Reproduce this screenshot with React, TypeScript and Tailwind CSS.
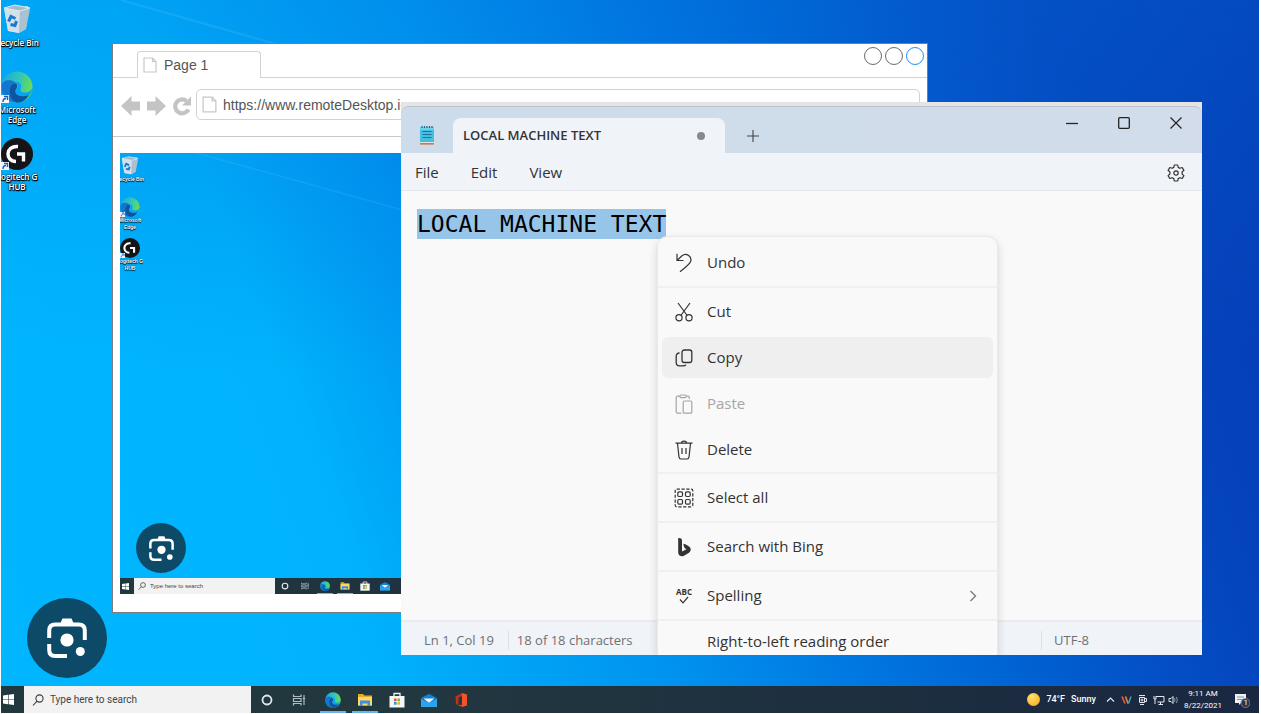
import React from "react";

type SizeProps = { small?: boolean };

function RecycleIcon({ small }: SizeProps) {
  return (
    <svg viewBox="0 0 32 32" className={small ? "size-5" : "size-8"} aria-hidden="true">
      <path d="M3 4 27 2 25 25 18 29 7 27Z" fill="#c3d9e6" />
      <path d="M3 4 19 6 18 29 7 27Z" fill="#d3e1ea" />
      <path d="M19 6 29 5 25 25 18 29Z" fill="#a9c1d0" />
      <path d="M3 4 14 1 29 4 19 7Z" fill="#a3bbc9" stroke="#dcebf3" strokeWidth="1" />
      <path d="M7.500 17.500 10 12.500 14.500 14.500M15.500 17 14 21.500 9.500 20.500" fill="none" stroke="#1a78d0" strokeWidth="3" />
    </svg>
  );
}

function EdgeLogo({ className, id }: { className: string; id: string }) {
  return (
    <svg viewBox="0 0 32 32" className={className} aria-hidden="true">
      <defs>
        <linearGradient id={id} x1="0" y1="0.300" x2="1" y2="0.500">
          <stop offset="0" stopColor="#1fa9dc" />
          <stop offset="0.500" stopColor="#2dc4c0" />
          <stop offset="1" stopColor="#6fdd4b" />
        </linearGradient>
      </defs>
      <circle cx="16" cy="16" r="15.500" fill={`url(#${id})`} />
      <path d="M.500 16C1 8 9 8.500 13 10.500 18 13 16 17 14.500 19 13 24 20 27 28 24 25 29 21 31.500 16 31.500 7 31.500.500 25 .500 16Z" fill="#1377cf" />
      <path d="M9 22C8 15 12 12 15 13 17 14 16 17 14.500 19 13 24 20 27 28.500 23 24 31 19 31.500 16 31.500 12 30.500 9.500 27 9 22Z" fill="#10549f" />
      <path d="M15 19C18 16 17 13 15 11.500 17 10 21 13 20 17 18.500 19.500 20 21.500 24 21.500 28 21.500 30 19.500 31.500 17 31 20 30 22 28.500 24 20 27 13.500 24 15 19Z" fill="#08a3f5" />
    </svg>
  );
}

function LogitechIcon({ small }: SizeProps) {
  return (
    <svg viewBox="0 0 32 32" className={small ? "size-5" : "size-8"} aria-hidden="true">
      <circle cx="16" cy="16" r="16" fill="#151518" />
      <path d="M17 8.500C4 7.500 4 23.500 15 23.500" fill="none" stroke="#fff" strokeWidth="3.400" />
      <path d="M16 16H22.500V23.500" fill="none" stroke="#fff" strokeWidth="3.400" />
    </svg>
  );
}

function ShortcutMark({ small }: SizeProps) {
  return (
    <svg
      viewBox="0 0 8 8"
      className={small ? "absolute bottom-0 left-0 size-[5px]" : "absolute bottom-0 left-0 size-2"}
      aria-hidden="true"
    >
      <rect width="8" height="8" fill="#f2f6fa" />
      <path d="M2 7C2 4 3.500 3.500 5 3.500M3 1.500H6.500V5" fill="none" stroke="#1b62b5" strokeWidth="1.400" />
    </svg>
  );
}

function DesktopIcons({ small }: SizeProps) {
  const item = small ? "flex h-[41px] w-5 flex-col items-center" : "flex h-[67px] w-8 flex-col items-center";
  const label = small
    ? "text-center text-[5px] leading-[7px] font-semibold whitespace-nowrap text-white [text-shadow:0_1px_1px_#000,0_0_1px_#000]"
    : "mt-0.5 text-center text-[8px] leading-[10px] font-semibold whitespace-nowrap text-white [text-shadow:0_1px_1px_#000,1px_1px_1px_#000,0_0_2px_#000]";
  return (
    <ul className={small ? "pt-[3px]" : "pt-1"}>
      <li className={item}>
        <RecycleIcon small={small} />
        <span className={label}>Recycle Bin</span>
      </li>
      <li className={item}>
        <span className="relative flex">
          <EdgeLogo className={small ? "size-5" : "size-8"} id={small ? "edge-icon-s" : "edge-icon-l"} />
          <ShortcutMark small={small} />
        </span>
        <span className={label}>
          Microsoft
          <br />
          Edge
        </span>
      </li>
      <li className={item}>
        <span className="relative flex">
          <LogitechIcon small={small} />
          <ShortcutMark small={small} />
        </span>
        <span className={label}>
          Logitech G
          <br />
          HUB
        </span>
      </li>
    </ul>
  );
}

function LensButton({ small }: SizeProps) {
  return (
    <button
      type="button"
      aria-label="Search with Lens"
      className={
        small
          ? "mb-[5px] ml-4 flex size-[50px] shrink-0 items-center justify-center rounded-full bg-[#0d4a68]"
          : "mb-2 ml-[26px] flex size-20 shrink-0 items-center justify-center rounded-full bg-[#0d4a68]"
      }
    >
      <svg viewBox="0 0 40 40" className={small ? "size-[25px]" : "size-10"} aria-hidden="true">
        <path d="M2.200 20V12.500Q2.200 6.500 8.200 6.500H31.800Q37.800 6.500 37.800 12.500V22M2.200 26V32Q2.200 38 8.200 38H20" fill="none" stroke="#fff" strokeWidth="4" />
        <path d="M13.500 5 15.500 .500H24.500L26.500 5Z" fill="#fff" />
        <circle cx="20" cy="22" r="6.600" fill="#fff" />
        <circle cx="33.300" cy="33.500" r="4.500" fill="#fff" />
      </svg>
    </button>
  );
}

function TaskIcons({ small }: SizeProps) {
  const cell = small ? "flex h-4 w-5 items-center justify-center" : "flex h-[27px] w-8 items-center justify-center";
  const active = small
    ? "flex h-4 w-5 items-center justify-center bg-[linear-gradient(#6cb4f0,#6cb4f0)] bg-[length:16px_1px] bg-bottom bg-no-repeat"
    : "flex h-[27px] w-8 items-center justify-center bg-[linear-gradient(#6cb4f0,#6cb4f0)] bg-[length:26px_2px] bg-bottom bg-no-repeat";
  const icon = small ? "size-[10px]" : "size-4";
  return (
    <div className={small ? "flex" : "flex gap-0.5"}>
      <div className="flex">
        <button type="button" aria-label="Cortana" className={cell}>
          <svg viewBox="0 0 16 16" className={icon}>
            <circle cx="8" cy="8" r="4.500" fill="none" stroke="#e4eaec" strokeWidth="1.800" />
          </svg>
        </button>
        <button type="button" aria-label="Task view" className={cell}>
          <svg viewBox="0 0 16 16" className={icon} fill="none" stroke="#b3bdc1" strokeWidth="1.200">
            <path d="M2.500 2.500V4.500H10V2.500M2.500 13.500V11.500H10V13.500M2.500 6.500H10V9.500H2.500ZM13 3V13M11.800 6.500H14.200" />
          </svg>
        </button>
      </div>
      <div className="flex">
        <button type="button" aria-label="Microsoft Edge" className={active}>
          <EdgeLogo className={icon} id={small ? "edge-task-s" : "edge-task-l"} />
        </button>
        <button type="button" aria-label="File Explorer" className={active}>
          <svg viewBox="0 0 16 16" className={icon}>
            <path d="M1 2H6L7.500 3.500H15V13.500H1Z" fill="#e9a920" />
            <path d="M1 5H15V13.500H1Z" fill="#fdd768" />
            <path d="M3 8.500H13V14H10.500V11.500H5.500V14H3Z" fill="#3f8fdc" />
          </svg>
        </button>
        <button type="button" aria-label="Microsoft Store" className={cell}>
          <svg viewBox="0 0 16 16" className={icon}>
            <path d="M5 5V1.500H11V5" fill="none" stroke="#eef2f4" strokeWidth="1.300" />
            <path d="M.500 4H15.500V15.500H.500Z" fill="#f4f6f7" />
            <path d="M5 6.500H7.600V9.200H5Z" fill="#e8512f" />
            <path d="M8.400 6.500H11V9.200H8.400Z" fill="#7db82c" />
            <path d="M5 10H7.600V12.700H5Z" fill="#1f9fe0" />
            <path d="M8.400 10H11V12.700H8.400Z" fill="#f4b51c" />
          </svg>
        </button>
        <button type="button" aria-label="Mail" className={cell}>
          <svg viewBox="0 0 16 16" className={icon}>
            <path d="M0 6 8 1.500 16 6V15H0Z" fill="#0f63b5" />
            <path d="M1 5.500 8 2.500 15 5.500 8 10.500Z" fill="#1581d3" />
            <path d="M2.500 6.500H13.500L8 11Z" fill="#e9f4fb" />
            <path d="M0 6.500 8 11 16 6.500V15H0Z" fill="#2ba4ea" />
          </svg>
        </button>
        <button type="button" aria-label="Office" className={cell}>
          <svg viewBox="0 0 16 16" className={icon}>
            <path d="M9 1 14 2.500V13.500L9 15Z" fill="#f0552a" />
            <path d="M9 1V4L5.500 5.500V11.500L3 12.500 2.500 4.500Z" fill="#c4301c" />
            <path d="M3 12.500 9 13V15Z" fill="#d83b1e" />
          </svg>
        </button>
      </div>
    </div>
  );
}

function Tray() {
  return (
    <div className="ml-auto flex items-center text-[9px] text-white">
      <span className="size-[13px] rounded-full bg-[radial-gradient(circle_at_35%_30%,#ffe36b,#f9a11b)]" />
      <span className="ml-1.5 flex gap-1.5 font-medium">
        <span>74°F</span>
        <span>Sunny</span>
      </span>
      <svg viewBox="0 0 72 12" className="ml-2.5 h-3 w-18" fill="none" stroke="#e4e8ee" strokeWidth="1" aria-hidden="true">
        <path d="M1 7.500 4.500 4 8 7.500" strokeWidth="1.200" />
        <path d="M16 2.500 19 9.500" stroke="#e0593b" strokeWidth="1.800" />
        <path d="M19.500 2.500 22 9.500" stroke="#d98a4a" strokeWidth="1.600" />
        <path d="M22.500 9.500 25 2.500" stroke="#3da8b8" strokeWidth="1.400" />
        <path d="M33 1.500H39M34 10.500H38M33.500 3.500H38.500V8.500H33.500ZM39 4.500H40.500V7.500H39" />
        <circle cx="36" cy="6" r="1" />
        <path d="M50 2.500H58V8H51.500M54.500 8V10.500M52.500 10.500H57M48 2V5H50V2M49 5V10" />
        <path d="M63 4.500H65L67 2.500V9.500L65 7.500H63Z" />
        <path d="M68.500 4Q69.500 6 68.500 8M70.500 3Q72 6 70.500 9" stroke="#8a95a8" />
      </svg>
      <time className="ml-1.5 text-center text-[8px] leading-3">
        9:11 AM
        <br />
        8/22/2021
      </time>
      <span className="relative mr-[9px] ml-3 flex size-4">
        <svg viewBox="0 0 16 16" className="size-4" aria-hidden="true">
          <path d="M1 2H12V11H7L5 13V11H1Z" fill="#eef0f4" />
          <path d="M3 5H10M3 7.500H10" stroke="#8b93a3" strokeWidth="1" />
          <circle cx="11.500" cy="11" r="4.500" fill="#2a3548" stroke="#8b93a3" strokeWidth=".800" />
        </svg>
        <span className="absolute right-0.5 bottom-0 text-[8px] leading-[10px]">1</span>
      </span>
    </div>
  );
}

function Taskbar({ small }: SizeProps) {
  return (
    <footer
      className={
        small
          ? "flex h-4 shrink-0 items-center bg-linear-to-r from-[#22383f] to-[#1a2740]"
          : "flex h-[27px] shrink-0 items-center bg-linear-to-r from-[#22383f] from-30% to-[#1a2740] font-[Roboto,'Open_Sans',sans-serif]"
      }
    >
      <button
        type="button"
        aria-label="Start"
        className={small ? "flex w-3.5 justify-center pr-1" : "flex w-[23px] shrink-0 justify-center pr-2"}
      >
        <svg viewBox="0 0 11 11" className={small ? "size-[7px]" : "size-[11px]"} fill="#fff">
          <path d="M0 1.500 5 .800V5.200H0ZM5.600.700 11 0V5.200H5.600ZM0 5.800H5V10.200L0 9.500ZM5.600 5.800H11V11L5.600 10.300Z" />
        </svg>
      </button>
      <label
        className={
          small
            ? "flex h-4 w-[141px] items-center gap-1 bg-[#f2f2f2] px-1"
            : "flex h-[27px] w-[227px] items-center gap-1.5 bg-[#f2f2f2] px-2"
        }
      >
        <svg
          viewBox="0 0 12 12"
          className={small ? "size-2 shrink-0" : "size-3 shrink-0"}
          fill="none"
          stroke="#3a3a3a"
          strokeWidth="1.100"
          aria-hidden="true"
        >
          <circle cx="7.500" cy="4.500" r="3.600" />
          <path d="M5 7.200 1 11.500" />
        </svg>
        <input
          type="text"
          aria-label="Search"
          placeholder="Type here to search"
          className={
            small
              ? "w-full min-w-0 bg-transparent text-[6px] leading-2 outline-none placeholder:text-[#444]"
              : "w-full min-w-0 bg-transparent text-[10px] leading-4 outline-none placeholder:text-[#444]"
          }
        />
      </label>
      <TaskIcons small={small} />
      {!small && <Tray />}
    </footer>
  );
}

function Desktop({ small, children }: { small?: boolean; children?: React.ReactNode }) {
  return (
    <div className="relative flex flex-1 flex-col overflow-hidden bg-[linear-gradient(to_bottom,#0078e040,transparent_50%),linear-gradient(70deg,#00b6ff_0%,#00b3fc_25%,#0095f0_44%,#0072de_60%,#005fd0_70%,#0450c6_77%,#0444bd_85%,#053ab4_100%)]">
      <svg
        viewBox="0 0 1258 713"
        preserveAspectRatio="none"
        className="pointer-events-none absolute inset-0 size-full"
        aria-hidden="true"
      >
        <path d="M120 0 560 125" stroke="#5cc4ff" strokeOpacity=".220" strokeWidth="2" />
      </svg>
      <div className="flex-1">
        <DesktopIcons small={small} />
      </div>
      <LensButton small={small} />
      <Taskbar small={small} />
      {children}
    </div>
  );
}

function PageIcon({ className }: { className: string }) {
  return (
    <svg viewBox="0 0 14 16" className={className} fill="#fff" stroke="#c8c8c8" strokeWidth="1.200" aria-hidden="true">
      <path d="M1 1H9.500L13 4.500V15H1ZM9.500 1V4.500H13" />
    </svg>
  );
}

function BrowserWindow() {
  return (
    <section
      aria-label="Browser"
      className="absolute top-[43px] left-[111px] flex h-[570px] w-[816px] flex-col border border-[#7c7c7c] bg-white font-['Liberation_Sans',Arial,sans-serif] text-[#555]"
    >
      <div className="flex h-[34px] shrink-0 border-b border-[#d2d2d2] pt-[7px] pr-[3px] pl-6">
        <div className="flex h-[27px] w-[124px] items-center gap-[7px] rounded-t border border-b-0 border-[#d2d2d2] bg-white pl-[5px] text-[14px]">
          <PageIcon className="h-4 w-3.5" />
          Page 1
        </div>
        <div className="-mt-1 ml-auto flex gap-[3px]">
          <button type="button" aria-label="Minimize" className="size-[18px] rounded-full border border-[#6b6b6b]" />
          <button type="button" aria-label="Maximize" className="size-[18px] rounded-full border border-[#6b6b6b]" />
          <button type="button" aria-label="Close" className="size-[18px] rounded-full border border-[#1e90ff]" />
        </div>
      </div>
      <div className="flex h-[59px] shrink-0 items-start border-b border-[#c8c8c8] pt-[11px] pr-[7px] pl-2">
        <div className="flex h-[31px] items-center gap-[7px] pt-0.5 text-[#c4c4c4]">
          <button type="button" aria-label="Back">
            <svg viewBox="0 0 19 20" className="h-5 w-[19px]" fill="currentColor">
              <path d="M0 10 10.500 0V5.500H19V14.500H10.500V20Z" />
            </svg>
          </button>
          <button type="button" aria-label="Forward">
            <svg viewBox="0 0 19 20" className="h-5 w-[19px]" fill="currentColor">
              <path d="M19 10 8.500 0V5.500H0V14.500H8.500V20Z" />
            </svg>
          </button>
          <button type="button" aria-label="Reload">
            <svg viewBox="0 0 19 20" className="h-5 w-[19px]" fill="none" stroke="currentColor" strokeWidth="4.200">
              <path d="M15.500 13.500A7 7 0 1 1 13.500 4.800" />
              <path d="M18 .500V9.500H9Z" fill="currentColor" stroke="none" />
            </svg>
          </button>
        </div>
        <label className="ml-1 flex h-[31px] flex-1 items-center gap-1.5 rounded-[5px] border border-[#d2d2d2] pl-[5px]">
          <PageIcon className="h-[17px] w-[15px] shrink-0" />
          <input
            type="text"
            aria-label="Address"
            defaultValue="https://www.remoteDesktop.io"
            className="w-full min-w-0 bg-transparent text-[14px] leading-5 outline-none"
          />
        </label>
      </div>
      <div className="flex flex-1 flex-col px-[7px] pt-4 pb-[18px]">
        <Desktop small />
      </div>
    </section>
  );
}

function NotepadIcon() {
  return (
    <svg viewBox="0 0 16 20" className="h-5 w-4" aria-hidden="true">
      <path d="M1 17H15V19.500H1Z" fill="#e8e2da" />
      <path d="M1 18.200H15V19.500H1Z" fill="#b5643a" />
      <path d="M1 2H15V17H1Z" fill="#43bfe0" />
      <path d="M1 2H15V5H1Z" fill="#6bd4ec" />
      <path d="M3 1V3M5.500 1V3M8 1V3M10.500 1V3M13 1V3" stroke="#1a6a8c" strokeWidth="1.200" />
      <path d="M3.500 6.500H12.500M3.500 9.500H12.500M3.500 12.500H12.500" stroke="#1f7396" strokeWidth="1.100" />
    </svg>
  );
}

const menuIcon = "size-5 shrink-0";

function UndoIcon() {
  return (
    <svg viewBox="0 0 20 20" className={menuIcon} fill="none" stroke="currentColor" strokeWidth="1.200">
      <path d="M3 .800V7.500H9.500M3 7.500 8 2.700C12.500-1 18.500 4 16.500 8.700 15.500 11.200 12 14 6 18.800" />
    </svg>
  );
}
function CutIcon() {
  return (
    <svg viewBox="0 0 20 20" className={menuIcon} fill="none" stroke="currentColor" strokeWidth="1.200">
      <path d="M4 1 12.800 13M16 1 7.200 13" />
      <circle cx="5" cy="15.800" r="3.100" />
      <circle cx="15" cy="15.800" r="3.100" />
    </svg>
  );
}
function CopyIcon() {
  return (
    <svg viewBox="0 0 20 20" className={menuIcon} fill="none" stroke="currentColor" strokeWidth="1.300">
      <rect x="8" y="2" width="9.800" height="12.500" rx="2.200" />
      <path d="M5.500 5Q2.200 5 2.200 8.500V14.500Q2.200 17.800 5.500 17.800H8.500Q11.300 17.800 12 16.800" />
    </svg>
  );
}
function PasteIcon() {
  return (
    <svg viewBox="0 0 20 20" className={menuIcon} fill="none" stroke="currentColor" strokeWidth="1.200">
      <path d="M5.500 2.200H3.500Q2.200 2.200 2.200 3.500V18Q2.200 19.200 3.500 19.200H7.500M12.500 2.200H14Q15.300 2.200 15.300 3.500V5" />
      <rect x="5.800" y="1" width="6.400" height="2.600" rx="1.300" />
      <rect x="9.200" y="7" width="8.600" height="12.200" rx="1.300" />
    </svg>
  );
}
function DeleteIcon() {
  return (
    <svg viewBox="0 0 20 20" className={menuIcon} fill="none" stroke="currentColor" strokeWidth="1.200">
      <path d="M1.500 3.200H18.500M7.500 3C7.500.500 12.500.500 12.500 3M3.500 3.500 5 17Q5.300 19 7 19H13Q14.700 19 15 17L16.500 3.500M8 8V14M12 8V14" />
    </svg>
  );
}
function SelectAllIcon() {
  return (
    <svg viewBox="0 0 20 20" className={menuIcon} fill="none" stroke="currentColor" strokeWidth="1.200">
      <rect x="1.200" y="1.200" width="17.600" height="17.600" rx="1.500" strokeDasharray="3.200 1.600" />
      <rect x="3.800" y="3.800" width="4.700" height="4.700" rx="1.200" />
      <rect x="11.500" y="3.800" width="4.700" height="4.700" rx="1.200" />
      <rect x="3.800" y="11.500" width="4.700" height="4.700" rx="1.200" />
      <rect x="11.500" y="11.500" width="4.700" height="4.700" rx="1.200" />
    </svg>
  );
}
function BingIcon() {
  return (
    <svg viewBox="0 0 20 20" className={menuIcon} fill="currentColor">
      <path d="M4.200 1 6.500 1.300Q8 1.800 8 3.500V14.500L12.500 12.300 10.800 11.300Q9.500 9 9.300 6.800 10 6.300 14 8.800 17 10.500 16.800 12.500 16.700 14.500 15 15.800L10 18.800Q7.500 20 5.600 18.500 4.200 17.300 4.200 15.500Z" />
    </svg>
  );
}
function SpellingIcon() {
  return (
    <span className="flex w-5 shrink-0 flex-col items-center" aria-hidden="true">
      <span className="text-[8px] leading-2 font-bold">ABC</span>
      <svg viewBox="0 0 10 8" className="h-2 w-2.5" fill="none" stroke="currentColor" strokeWidth="1.200">
        <path d="M1 3.500 4 6.800 9 1" />
      </svg>
    </span>
  );
}

function MenuItem({
  icon,
  label,
  active,
  disabled,
  submenu,
}: {
  icon?: React.ReactNode;
  label: string;
  active?: boolean;
  disabled?: boolean;
  submenu?: boolean;
}) {
  return (
    <button
      type="button"
      role="menuitem"
      disabled={disabled}
      className={
        active
          ? "flex h-[41px] w-full items-center gap-[13px] rounded-md bg-[#efefef] px-3 text-left"
          : disabled
            ? "flex h-[41px] w-full items-center gap-[13px] rounded-md px-3 text-left text-[#a6a6a6]"
            : "flex h-[41px] w-full items-center gap-[13px] rounded-md px-3 text-left"
      }
    >
      {icon ?? <span className="w-5 shrink-0" />}
      <span className="flex-1">{label}</span>
      {submenu && (
        <svg viewBox="0 0 8 12" className="mr-1 h-3 w-2" fill="none" stroke="#777" strokeWidth="1.300" aria-hidden="true">
          <path d="M1.500 1 6.500 6 1.500 11" />
        </svg>
      )}
    </button>
  );
}

function ContextMenu() {
  const group = "border-b-2 border-[#f0f0f0] px-1 py-[3px]";
  return (
    <div
      role="menu"
      className="absolute top-[134px] left-[256px] h-[419px] w-[341px] overflow-hidden rounded-t-[10px] border border-b-0 border-[#e9e9e9] bg-[#f9f9f9] text-[15px] text-[#333] shadow-[0_4px_10px_#00000026]"
    >
      <div className="border-b-2 border-[#f0f0f0] px-1 pt-[5px] pb-[3px]">
        <MenuItem icon={<UndoIcon />} label="Undo" />
      </div>
      <div className="flex flex-col gap-[5px] border-b-2 border-[#f0f0f0] px-1 pt-[3px] pb-0.5">
        <MenuItem icon={<CutIcon />} label="Cut" />
        <MenuItem icon={<CopyIcon />} label="Copy" active />
        <MenuItem icon={<PasteIcon />} label="Paste" disabled />
        <MenuItem icon={<DeleteIcon />} label="Delete" />
      </div>
      <div className={group}>
        <MenuItem icon={<SelectAllIcon />} label="Select all" />
      </div>
      <div className={group}>
        <MenuItem icon={<BingIcon />} label="Search with Bing" />
      </div>
      <div className={group}>
        <MenuItem icon={<SpellingIcon />} label="Spelling" submenu />
      </div>
      <div className="px-1">
        <MenuItem label="Right-to-left reading order" />
      </div>
    </div>
  );
}

function GearIcon() {
  return (
    <svg viewBox="0 0 18 18" className="size-[18px]" fill="none" stroke="#333" strokeWidth="1.200" strokeLinejoin="round">
      <path d="M7.300 1H10.700L11.200 3.400 12.900 4.300 15.200 3.500 16.900 6.400 15.100 8V10L16.900 11.600 15.200 14.500 12.900 13.700 11.200 14.600 10.700 17H7.300L6.800 14.600 5.100 13.700 2.800 14.500 1.100 11.600 2.900 10V8L1.100 6.400 2.800 3.500 5.100 4.300 6.800 3.400Z" />
      <circle cx="9" cy="9" r="2.200" />
    </svg>
  );
}

function NotepadWindow() {
  return (
    <section
      aria-label="Notepad"
      className="absolute top-[102px] left-[400px] flex h-[553px] w-[801px] flex-col overflow-hidden bg-[#e4e4e4] pt-1 text-[#333]"
    >
      <header className="flex h-[47px] shrink-0 items-end rounded-t-lg border-t border-[#bcc3cc] bg-linear-to-r from-[#cddcea] to-[#d2dceb]">
        <div className="flex h-9 w-[52px] items-center justify-center">
          <NotepadIcon />
        </div>
        <div className="flex h-[35px] w-[272px] items-center justify-between rounded-t-lg bg-[#f0f4f9] pt-px pr-5 pl-2.5 text-[13px] font-semibold">
          <h1>LOCAL MACHINE TEXT</h1>
          <span className="size-2 rounded-full bg-[#858a8f]" />
        </div>
        <button type="button" aria-label="New tab" className="flex h-[35px] w-14 items-center justify-center">
          <svg viewBox="0 0 12 12" className="size-3" stroke="#444" strokeWidth="1.100">
            <path d="M6 0V12M0 6H12" />
          </svg>
        </button>
        <div className="ml-auto flex h-full gap-10 pt-2.5 pr-5">
          <button type="button" aria-label="Minimize" className="flex h-3">
            <svg viewBox="0 0 12 12" className="size-3" stroke="#222" strokeWidth="1.300">
              <path d="M0 6.500H12" />
            </svg>
          </button>
          <button type="button" aria-label="Maximize" className="flex h-3">
            <svg viewBox="0 0 12 12" className="size-3" fill="none" stroke="#222" strokeWidth="1.300">
              <rect x=".700" y=".700" width="10.600" height="10.600" rx="1" />
            </svg>
          </button>
          <button type="button" aria-label="Close" className="flex h-3">
            <svg viewBox="0 0 12 12" className="size-3" stroke="#222" strokeWidth="1.200">
              <path d="M.500.500 11.500 11.500M11.500.500.500 11.500" />
            </svg>
          </button>
        </div>
      </header>
      <nav className="flex h-[38px] shrink-0 items-center gap-8 border-b border-[#e3e7eb] bg-[#f0f4f9] pt-0.5 pr-[17px] pl-3.5 text-[15px]">
        <button type="button">File</button>
        <button type="button">Edit</button>
        <button type="button">View</button>
        <button type="button" aria-label="Settings" className="ml-auto">
          <GearIcon />
        </button>
      </nav>
      <main className="flex-1 bg-[#f9f9f9] px-4 pt-[18px]">
        <p className="font-['DejaVu_Sans_Mono',monospace] text-[23px] leading-[30px] text-black">
          <mark className="inline-block bg-[#96c5e9] text-black">LOCAL MACHINE TEXT</mark>
        </p>
      </main>
      <footer className="flex h-[35px] shrink-0 items-center border-t-2 border-[#e9ebee] bg-[#f0f3f8] pt-1 pl-[23px] text-[13px] text-[#707070]">
        <span>Ln 1, Col 19</span>
        <span className="ml-3.5 border-l border-[#dcdfe4] pl-2">18 of 18 characters</span>
        <span className="mr-[113px] ml-auto border-l border-[#dcdfe4] pl-3">UTF-8</span>
      </footer>
      <ContextMenu />
    </section>
  );
}

export default function App() {
  return (
    <div className="flex min-h-screen flex-col overflow-hidden bg-white pr-0.5 pb-px pl-px font-['Open_Sans','Noto_Sans',sans-serif]">
      <Desktop>
        <BrowserWindow />
        <NotepadWindow />
      </Desktop>
    </div>
  );
}
